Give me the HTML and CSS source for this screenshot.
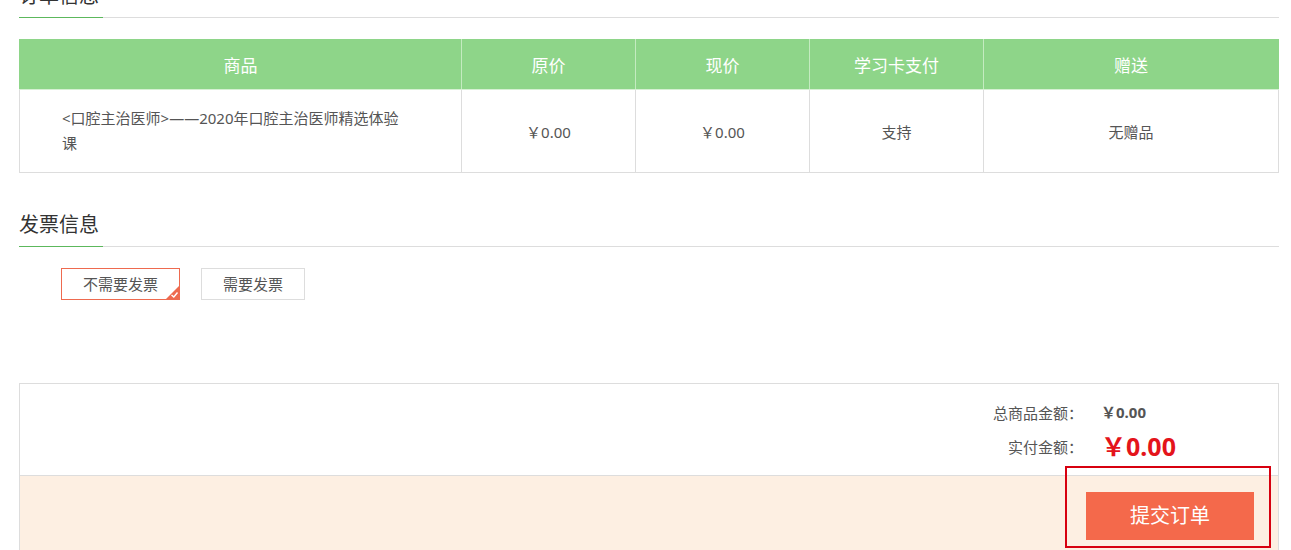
FILE: index.html
```html
<!DOCTYPE html>
<html lang="zh-CN">
<head>
    <meta charset="UTF-8">
    <meta name="viewport" content="width=device-width, initial-scale=1.0">
    <title>确认订单</title>
    <link rel="stylesheet" href="styles.css">
</head>
<body>

    <div class="page">

        <!-- 订单信息 -->
        <section class="block order-block">
            <div class="block-title"><h3>订单信息</h3></div>
            <table class="order-table">
                <colgroup>
                    <col style="width:442px">
                    <col style="width:174px">
                    <col style="width:174px">
                    <col style="width:174px">
                    <col>
                </colgroup>
                <thead>
                    <tr>
                        <th>商品</th>
                        <th>原价</th>
                        <th>现价</th>
                        <th>学习卡支付</th>
                        <th>赠送</th>
                    </tr>
                </thead>
                <tbody>
                    <tr>
                        <td class="goods-name">&lt;口腔主治医师&gt;——2020年口腔主治医师精选体验课</td>
                        <td>￥0.00</td>
                        <td>￥0.00</td>
                        <td>支持</td>
                        <td>无赠品</td>
                    </tr>
                </tbody>
            </table>
        </section>

        <!-- 发票信息 -->
        <section class="block invoice-block">
            <div class="block-title"><h3>发票信息</h3></div>
            <div class="invoice-options">
                <a href="#" class="invoice-btn active">
                    不需要发票
                    <svg class="corner-check" width="13" height="13" viewBox="0 0 13 13">
                        <polygon points="13,0 13,13 0,13" fill="#ee6a4f"/>
                        <polyline points="5.5,9 7.8,11 11.5,6.5" fill="none" stroke="#fff" stroke-width="1.4"/>
                    </svg>
                </a>
                <a href="#" class="invoice-btn">需要发票</a>
            </div>
        </section>

        <!-- 结算 -->
        <section class="summary">
            <div class="summary-amount">
                <div class="amount-row">
                    <span class="amount-label">总商品金额：</span>
                    <span class="amount-value">￥0.00</span>
                </div>
                <div class="amount-row">
                    <span class="amount-label">实付金额：</span>
                    <span class="amount-value pay">￥0.00</span>
                </div>
            </div>
            <div class="summary-submit">
                <div class="submit-wrap">
                    <a href="#" class="submit-btn">提交订单</a>
                </div>
            </div>
        </section>

    </div>

</body>
</html>
```

FILE: styles.css
```css
body {
    margin: 0;
    padding: 0;
    background-color: #fff;
    font-family: "Noto Sans", "Noto Sans CJK SC", sans-serif;
    color: #555;
    font-size: 15px;
}
a {
    text-decoration: none;
}
.page {
    margin: -19px 12px 0 19px;
}
.block-title {
    border-bottom: 1px solid #ddd;
    height: 36px;
}
.block-title h3 {
    display: inline-block;
    margin: 0;
    padding: 0 4px 0 0;
    height: 36px;
    line-height: 30px;
    font-size: 20px;
    font-weight: normal;
    color: #333;
    border-bottom: 1px solid #5cb85c;
    box-sizing: content-box;
}
.order-table {
    width: 100%;
    margin-top: 21px;
    border-collapse: collapse;
    table-layout: fixed;
}
.order-table th {
    height: 50px;
    padding: 0;
    background-color: #8ed589;
    color: #fff;
    font-size: 17px;
    font-weight: normal;
    border-left: 1px solid #c4ebc0;
    border-bottom: 1px solid #d6f0d3;
}
.order-table th:first-child {
    border-left: 1px solid #8ed589;
}
.order-table th:last-child {
    border-right: 1px solid #8ed589;
}
.order-table td {
    height: 82px;
    padding: 0;
    border: 1px solid #ddd;
    border-top: none;
    text-align: center;
    font-size: 15px;
    color: #555;
}
.order-table td.goods-name {
    text-align: left;
    padding: 0 54px 0 42px;
    line-height: 25px;
}
.invoice-block {
    margin-top: 37px;
}
.invoice-options {
    display: flex;
    gap: 21px;
    padding: 21px 0 0 42px;
}
.invoice-btn {
    position: relative;
    display: block;
    height: 30px;
    line-height: 30px;
    padding: 0 21px;
    border: 1px solid #ddd;
    color: #555;
    font-size: 15px;
}
.invoice-btn.active {
    border-color: #ee6a4f;
}
.corner-check {
    position: absolute;
    right: 0;
    bottom: 0;
}
.summary {
    margin-top: 83px;
    border: 1px solid #ddd;
    border-bottom: none;
}
.summary-amount {
    padding: 16px 0 12px;
    border-bottom: 1px solid #ddd;
}
.amount-row {
    display: flex;
    justify-content: flex-end;
    align-items: center;
}
.amount-label {
    font-size: 15px;
    color: #555;
}
.amount-value {
    width: 160px;
    margin-left: 18px;
    padding-right: 17px;
    line-height: 24px;
    font-weight: bold;
    color: #555;
}
.amount-row + .amount-row {
    margin-top: 5px;
}
.amount-value.pay {
    font-size: 25px;
    line-height: 34px;
    color: #e4141b;
}
.summary-submit {
    background-color: #fdefe2;
    padding: 16px 24px 10px 0;
    display: flex;
    justify-content: flex-end;
}
.submit-wrap {
    position: relative;
}
.submit-btn {
    display: block;
    width: 168px;
    height: 48px;
    line-height: 48px;
    text-align: center;
    background-color: #f4694b;
    color: #fff;
    font-size: 20px;
}
.submit-wrap::after {
    content: "";
    position: absolute;
    left: -21px;
    right: -17px;
    top: -26px;
    bottom: -8px;
    border: 2px solid #d7000f;
}
```
